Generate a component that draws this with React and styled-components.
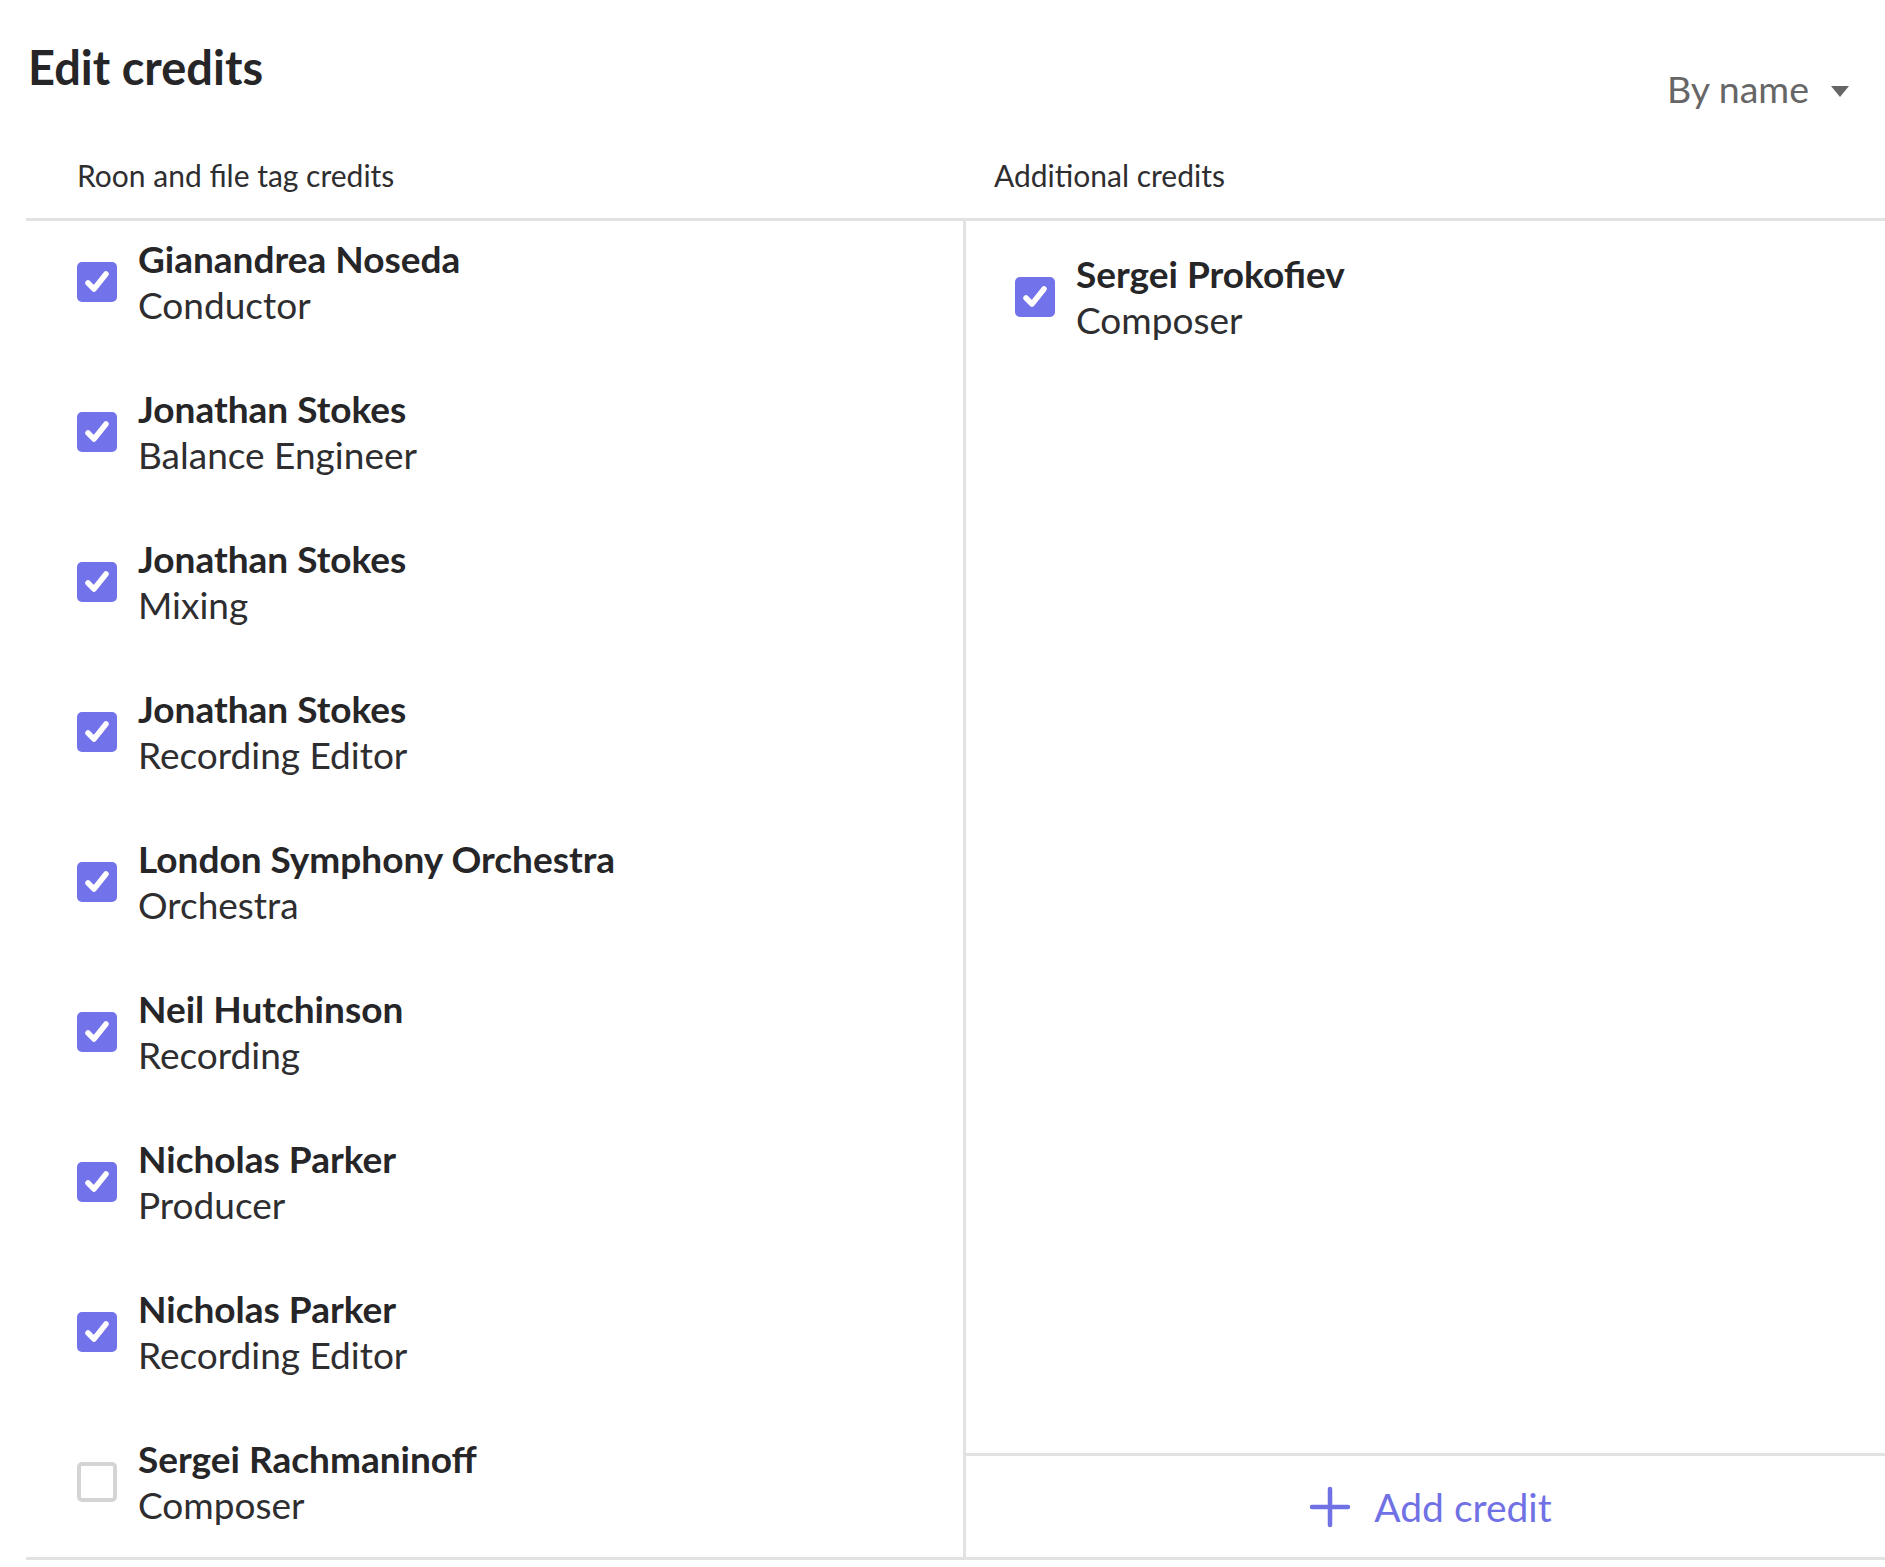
import React from 'react'
import styled, {createGlobalStyle} from 'styled-components'

const GlobalStyle = createGlobalStyle`
    html, body {
        margin: 0;
        padding: 0;
        background: #fff;
    }
    body {
        font-family: Lato, "Open Sans", sans-serif;
        color: #2a2a2c;
    }
`

const Page = styled.div`
    width: 1885px;
    height: 1560px;
    padding-left: 26px;
    box-sizing: border-box;
    display: flex;
    flex-direction: column;
`

const TopBar = styled.div`
    display: flex;
    justify-content: space-between;
    align-items: flex-start;
    height: 130px;
    flex: none;
`

const Title = styled.h1`
    margin: 37px 0 0 2px;
    font-size: 47px;
    font-weight: 700;
    line-height: 60px;
    color: #262628;
`

const SortButton = styled.button`
    margin: 64px 36px 0 0;
    padding: 0;
    border: none;
    background: none;
    display: flex;
    align-items: center;
    gap: 22px;
    font-family: inherit;
    font-size: 37.5px;
    line-height: 50px;
    color: #666;
    cursor: pointer;
`

const Caret = styled.span`
    width: 0;
    height: 0;
    border-left: 9px solid transparent;
    border-right: 9px solid transparent;
    border-top: 11px solid #666;
    margin-top: 4px;
`

const HeaderRow = styled.div`
    flex: none;
    height: 88px;
    box-sizing: border-box;
    padding-bottom: 23px;
    display: grid;
    grid-template-columns: 940px 1fr;
    align-items: end;
`

const HeaderCell = styled.div`
    padding-left: ${p => p.$indent}px;
    font-size: 30px;
    line-height: 40px;
    color: #2e2e30;
`

const Columns = styled.div`
    flex: 1;
    min-height: 0;
    display: grid;
    grid-template-columns: 940px 1fr;
    border-top: 3px solid #e2e2e2;
    border-bottom: 3px solid #e2e2e2;
`

const Column = styled.div`
    display: flex;
    flex-direction: column;
    border-right: ${p => (p.$divider ? '3px solid #e2e2e2' : 'none')};
    min-height: 0;
`

const List = styled.div`
    flex: 1;
    display: flex;
    flex-direction: column;
    gap: 58px;
    padding: ${p => p.$top}px 0 0 ${p => p.$indent}px;
    overflow: hidden;
`

const Row = styled.label`
    display: flex;
    align-items: center;
    gap: 21px;
    cursor: pointer;
`

const Box = styled.span`
    width: 40px;
    height: 40px;
    box-sizing: border-box;
    border-radius: 5px;
    flex: none;
    display: flex;
    align-items: center;
    justify-content: center;
    background: ${p => (p.$checked ? '#7272ea' : '#fff')};
    border: ${p => (p.$checked ? 'none' : '4px solid #d4d4d4')};
`

const Text = styled.div`
    display: flex;
    flex-direction: column;
`

const Name = styled.span`
    font-size: 37px;
    font-weight: 700;
    line-height: 46px;
    color: #262628;
`

const Role = styled.span`
    font-size: 37px;
    line-height: 46px;
    color: #2e2e30;
`

const Footer = styled.button`
    flex: none;
    height: 104px;
    border: none;
    border-top: 3px solid #e2e2e2;
    background: none;
    display: flex;
    align-items: center;
    justify-content: center;
    gap: 23px;
    padding: 0 0 0 10px;
    font-family: inherit;
    font-size: 39px;
    color: #7171e6;
    cursor: pointer;
`

const Check = () => (
    <svg width="32" height="32" viewBox="0 0 32 32">
        <path d="M7 17 L13 23 L25 8" fill="none" stroke="#fff" strokeWidth="5.5" strokeLinecap="round" strokeLinejoin="round" />
    </svg>
)

const Plus = () => (
    <svg width="42" height="42" viewBox="0 0 42 42">
        <path d="M21 3 V39 M3 21 H39" stroke="#7171e6" strokeWidth="4.5" strokeLinecap="round" />
    </svg>
)

const fileCredits = [
    {name: 'Gianandrea Noseda', role: 'Conductor', checked: true},
    {name: 'Jonathan Stokes', role: 'Balance Engineer', checked: true},
    {name: 'Jonathan Stokes', role: 'Mixing', checked: true},
    {name: 'Jonathan Stokes', role: 'Recording Editor', checked: true},
    {name: 'London Symphony Orchestra', role: 'Orchestra', checked: true},
    {name: 'Neil Hutchinson', role: 'Recording', checked: true},
    {name: 'Nicholas Parker', role: 'Producer', checked: true},
    {name: 'Nicholas Parker', role: 'Recording Editor', checked: true},
    {name: 'Sergei Rachmaninoff', role: 'Composer', checked: false},
]

const extraCredits = [{name: 'Sergei Prokofiev', role: 'Composer', checked: true}]

const Credit = ({name, role, checked}) => (
    <Row>
        <Box $checked={checked}>{checked && <Check />}</Box>
        <Text>
            <Name>{name}</Name>
            <Role>{role}</Role>
        </Text>
    </Row>
)

export default function App() {
    return (
        <Page>
            <GlobalStyle />
            <TopBar>
                <Title>Edit credits</Title>
                <SortButton>
                    By name
                    <Caret />
                </SortButton>
            </TopBar>
            <HeaderRow>
                <HeaderCell $indent={51}>Roon and file tag credits</HeaderCell>
                <HeaderCell $indent={28}>Additional credits</HeaderCell>
            </HeaderRow>
            <Columns>
                <Column $divider>
                    <List $top={15} $indent={51}>
                        {fileCredits.map((c, i) => (
                            <Credit key={i} {...c} />
                        ))}
                    </List>
                </Column>
                <Column>
                    <List $top={30} $indent={49}>
                        {extraCredits.map((c, i) => (
                            <Credit key={i} {...c} />
                        ))}
                    </List>
                    <Footer>
                        <Plus />
                        Add credit
                    </Footer>
                </Column>
            </Columns>
        </Page>
    )
}
